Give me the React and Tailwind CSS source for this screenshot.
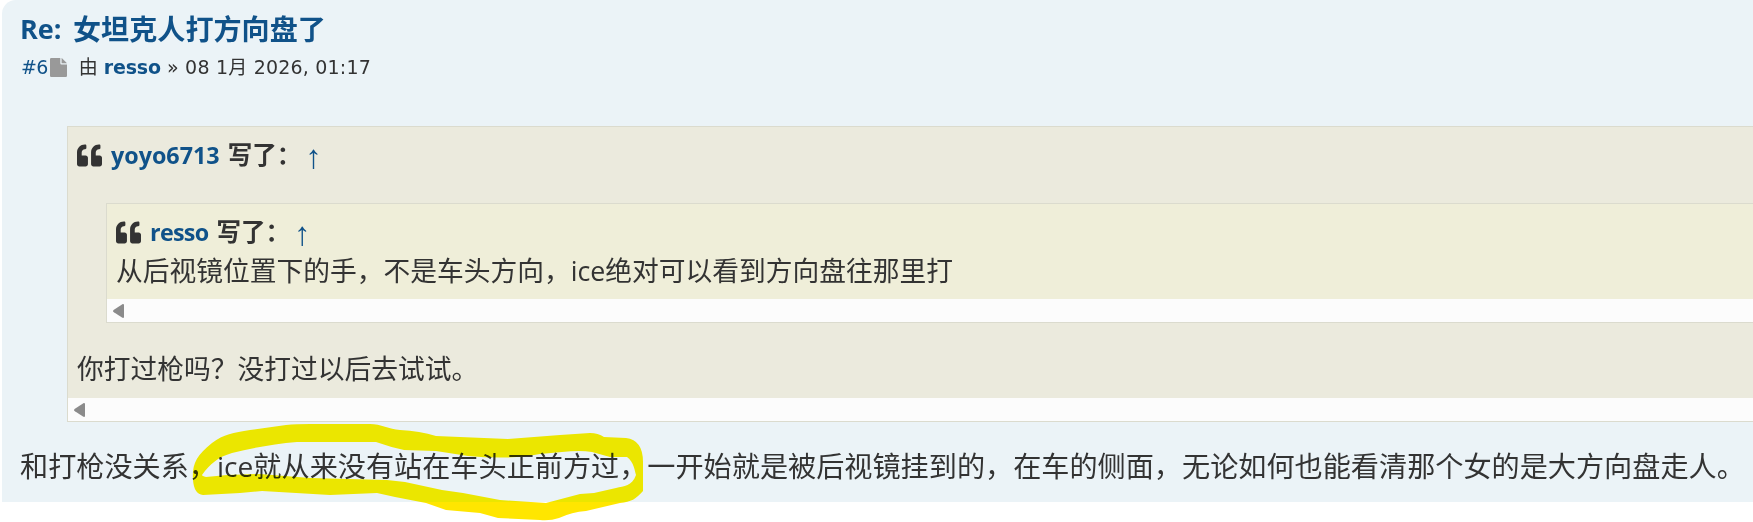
import { FaQuoteLeft } from 'react-icons/fa'

function FileIcon() {
  return (
    <svg className="mr-[12px] ml-[2px] h-[19px] w-[17px]" viewBox="0 0 17 19" fill="#999999">
      <path d="M10.300 0V5.300Q10.300 6.500 11.500 6.500H17V17.800Q17 19 15.800 19H1.200Q0 19 0 17.800V1.200Q0 0 1.200 0Z" />
      <path d="M11.600.1Q12.100.3 12.500.7L16.300 4.400Q16.700 4.800 16.900 5.300H11.600Z" />
    </svg>
  )
}

function ScrollTrack() {
  return (
    <div className="flex h-[23px] items-center bg-[#fcfcfc] pt-px pl-[6px]">
      <svg className="h-[14px] w-[11px]" viewBox="0 0 11 14" fill="#8b8b8b">
        <path d="M9.4.2C10.3-.2 11 .2 11 1v12c0 .8-.7 1.200-1.600.8L.9 8.300C-.3 7.500-.3 6.500.9 5.700Z" />
      </svg>
    </div>
  )
}

function QuoteHeader({ author, authorClass }) {
  return (
    <div className="flex h-[38px] items-center text-[24.500px] font-bold whitespace-pre">
      <FaQuoteLeft className="mr-[9px] size-[25px]" />
      <a href="#" className={authorClass}>{author}</a>
      <span className="ml-[8px]">写了：</span>
      <a href="#" className="mt-[4px] ml-[4px] font-['Liberation_Sans',sans-serif] text-[33px] leading-[38px] font-normal text-[#105289]">↑</a>
    </div>
  )
}

function Highlighter() {
  return (
    <svg
      className="pointer-events-none absolute top-0 left-0 h-[522px] w-[700px] mix-blend-darken"
      viewBox="0 0 700 522"
      fill="#ffe600"
      fillRule="evenodd"
    >
      <path d="M193 480C192 464 196 456 212 443C224 434 233 433 250 430L286 425Q296 424 310 424H370C381 424 389 429 400 430Q420 431 436 436L508 439L560 435L590 433Q598 433 604 437L626 438Q643 440 643 462V491C636 499 631 502 620 503L586 511Q572 512 559 518Q550 521 540 520L498 518L480 513L446 510L426 503L395 497L377 493L330 495L262 491L240 493L203 495Q194 494 193 480Z M202 475C210 464 218 457 232 453C252 448 274 444 297 442L376 442Q390 447 404 450L436 451L468 456Q510 460 540 454L562 452Q580 450 592 452L610 457L627 457C634 462 635 472 636 475C632 486 624 486 616 488L594 493L580 494L546 503L500 500L463 493L442 490L405 482L387 480L310 478L260 474L227 475L206 477Q202 476 202 475Z" />
    </svg>
  )
}

export default function App() {
  return (
    <div className="relative h-[522px] w-full overflow-hidden bg-white pl-[2px] font-['Open_Sans','Noto_Sans_CJK_SC',sans-serif] text-[#333333]">
      <article className="h-[502px] rounded-tl-[14px] bg-[#ebf3f7] pl-[18px]">
        <h3 className="flex pt-[11px] text-[28.100px] leading-[36px] font-bold whitespace-pre text-[#105289]">
          <span className="w-[53px] text-[27px]">Re:</span>
          <span>女坦克人打方向盘了</span>
        </h3>
        <p className="mt-[7px] flex h-[26px] items-center pl-px font-['DejaVu_Sans','Noto_Sans_CJK_SC',sans-serif] text-[19px] whitespace-pre">
          <a href="#" className="-tracking-[0.600px] text-[#105289]">#6</a>
          <FileIcon />
          <span>由 </span>
          <a href="#" className="-tracking-[0.200px] font-bold text-[#105289]">resso</a>
          <span className="tracking-[0.200px]"> » 08 1月 2026, 01:17</span>
        </p>

        <blockquote className="mt-[46px] ml-[47px] h-[296px] border border-r-0 border-[#dbdbce] bg-[#ebeadd]">
          <div className="h-[271px] pt-[9px] pl-[9px]">
            <QuoteHeader author="yoyo6713" authorClass="text-[23.300px] text-[#105289]" />
            <blockquote className="mt-[29px] ml-[29px] h-[120px] border border-r-0 border-[#dbdbce] bg-[#efeed9]">
              <div className="h-[95px] pt-[9px] pl-[9px]">
                <QuoteHeader author="resso" authorClass="text-[23.300px] tracking-[-0.700px] text-[#105289]" />
                <p className="pt-px text-[26.750px] leading-[38px] whitespace-nowrap">
                  从后视镜位置下的手，不是车头方向，ice绝对可以看到方向盘往那里打
                </p>
              </div>
              <ScrollTrack />
            </blockquote>
            <p className="mt-[27px] text-[26.750px] leading-[38px] whitespace-nowrap">
              你打过枪吗？没打过以后去试试。
            </p>
          </div>
          <ScrollTrack />
        </blockquote>

        <p className="mt-[24px] text-[28.150px] leading-[40px] whitespace-nowrap">
          和打枪没关系，ice就从来没有站在车头正前方过，一开始就是被后视镜挂到的，在车的侧面，无论如何也能看清那个女的是大方向盘走人。
        </p>
      </article>
      <Highlighter />
    </div>
  )
}
